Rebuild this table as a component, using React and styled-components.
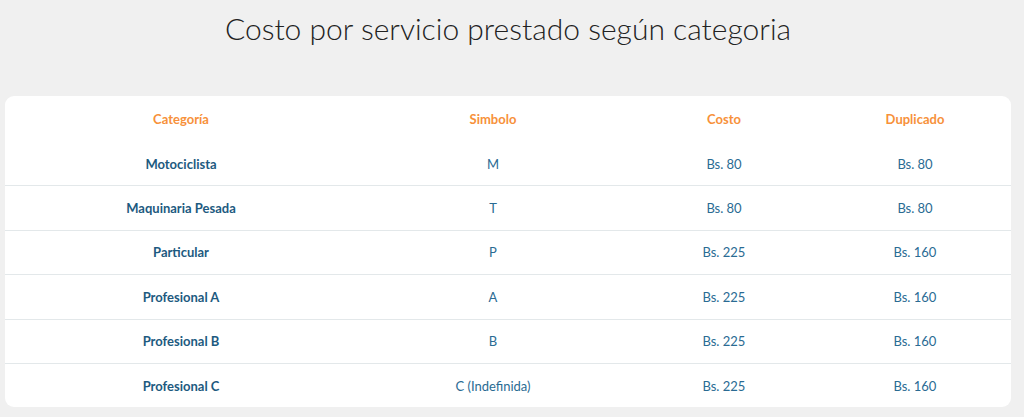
import React from "react";
import styled, { createGlobalStyle } from "styled-components";

const Global = createGlobalStyle`
  html, body { margin: 0; padding: 0; background: #f0f0f0; }
  body { font-family: Lato, "Open Sans", sans-serif; }
`;

const Page = styled.div`
  padding: 0 13px 0 5px;
  display: flex;
  flex-direction: column;
`;

const Title = styled.h1`
  margin: 0;
  padding-top: 8px;
  height: 96px;
  box-sizing: border-box;
  text-align: center;
  font-weight: 300;
  font-size: 30px;
  line-height: 40px;
  color: #222;
`;

const Card = styled.div`
  background: #fff;
  border-radius: 9px;
  overflow: hidden;
`;

const Table = styled.table`
  width: 100%;
  border-collapse: collapse;
  table-layout: fixed;
`;

const Th = styled.th`
  height: 46px;
  padding: 0;
  font-size: 13px;
  font-weight: 700;
  color: #f7913a;
  text-align: center;
`;

const Row = styled.tr`
  & + & td { border-top: 1px solid #e3e8ea; }
`;

const Td = styled.td`
  height: 43.4px;
  padding: 0;
  text-align: center;
  font-size: 13px;
  font-weight: ${(p) => (p.$bold ? 700 : 400)};
  color: ${(p) => (p.$bold ? "#1d5a80" : "#2a6b93")};
`;

const rows = [
  ["Motociclista", "M", "Bs. 80", "Bs. 80"],
  ["Maquinaria Pesada", "T", "Bs. 80", "Bs. 80"],
  ["Particular", "P", "Bs. 225", "Bs. 160"],
  ["Profesional A", "A", "Bs. 225", "Bs. 160"],
  ["Profesional B", "B", "Bs. 225", "Bs. 160"],
  ["Profesional C", "C (Indefinida)", "Bs. 225", "Bs. 160"],
];

export default function App() {
  return (
    <>
      <Global />
      <Page>
        <Title>Costo por servicio prestado según categoria</Title>
        <Card>
          <Table>
            <colgroup>
              <col style={{ width: "352px" }} />
              <col style={{ width: "272px" }} />
              <col style={{ width: "190px" }} />
              <col style={{ width: "192px" }} />
            </colgroup>
            <thead>
              <tr>
                <Th>Categoría</Th>
                <Th>Simbolo</Th>
                <Th>Costo</Th>
                <Th>Duplicado</Th>
              </tr>
            </thead>
            <tbody>
              {rows.map((r) => (
                <Row key={r[0]}>
                  <Td $bold>{r[0]}</Td>
                  <Td>{r[1]}</Td>
                  <Td>{r[2]}</Td>
                  <Td>{r[3]}</Td>
                </Row>
              ))}
            </tbody>
          </Table>
        </Card>
      </Page>
    </>
  );
}
